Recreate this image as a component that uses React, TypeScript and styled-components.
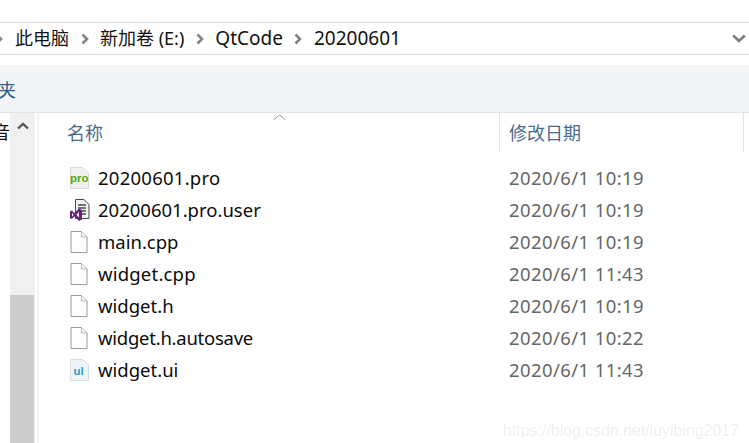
import React from 'react';
import styled, { createGlobalStyle } from 'styled-components';

const GlobalStyle = createGlobalStyle`
  html, body {
    margin: 0;
    padding: 0;
    background: #fff;
  }
`;

const FONT = `"Noto Sans", "Noto Sans CJK SC", sans-serif`;

const Page = styled.div`
  width: 749px;
  height: 443px;
  overflow: hidden;
  position: relative;
  display: flex;
  flex-direction: column;
  background: #fff;
  font-family: ${FONT};
  color: #111;
`;

const AddressBar = styled.div`
  margin-top: 22px;
  height: 31px;
  flex: none;
  display: flex;
  align-items: center;
  border-top: 1px solid #d9d9d9;
  border-bottom: 1px solid #d9d9d9;
  font-size: 18px;
`;

const LeadChevron = styled.span`
  width: 20px;
  margin-left: -5px;
  display: flex;
  align-items: center;
  flex: none;
`;

const Crumb = styled.span<{ $size: number }>`
  white-space: nowrap;
  line-height: 31px;
  font-size: ${p => p.$size}px;
`;

const CrumbSep = styled.span`
  width: 31px;
  display: flex;
  justify-content: center;
  align-items: center;
  flex: none;
`;

const Spacer = styled.div`
  flex: 1;
`;

const DownChevron = styled.svg`
  margin-right: 3px;
  flex: none;
`;

const Ribbon = styled.div`
  margin-top: 10px;
  height: 47px;
  flex: none;
  display: flex;
  align-items: center;
  background: #f3f4f6;
  border-bottom: 1px solid #e3e3e3;
  overflow: hidden;
`;

const RibbonLabel = styled.span`
  margin-left: -2px;
  font-size: 18px;
  color: #2d5a8c;
`;

const Body = styled.div`
  flex: 1;
  min-height: 0;
  display: flex;
`;

const NavPane = styled.div`
  width: 39px;
  flex: none;
  display: flex;
  overflow: hidden;
  border-right: 2px solid #f5f5f5;
  box-sizing: border-box;
`;

const NavText = styled.div`
  width: 10px;
  flex: none;
  overflow: hidden;
  direction: rtl;
  padding-top: 7px;
  font-size: 18px;
  line-height: 24px;
  white-space: nowrap;
`;

const Scrollbar = styled.div`
  width: 25px;
  flex: none;
  display: flex;
  flex-direction: column;
  background: #f0f0f0;
`;

const ScrollUp = styled.div`
  height: 32px;
  display: flex;
  justify-content: center;
  padding-top: 9px;
  box-sizing: border-box;
  flex: none;
`;

const ScrollTrack = styled.div`
  height: 150px;
  flex: none;
`;

const ScrollThumb = styled.div`
  flex: 1;
  width: 24px;
  background: #cdcdcd;
`;

const Main = styled.div`
  flex: 1;
  min-width: 0;
  position: relative;
`;

const SortCaret = styled.svg`
  position: absolute;
  left: 234px;
  top: 1px;
`;

const HeaderRow = styled.div`
  height: 39px;
  display: flex;
`;

const HeaderCell = styled.div<{ $width: number }>`
  width: ${p => p.$width}px;
  flex: none;
  box-sizing: border-box;
  border-right: 1px solid #e5e5e5;
  font-size: 18px;
  line-height: 41px;
  color: #4c6a8e;
  padding-left: ${p => (p.$width > 300 ? 28 : 9)}px;
`;

const FileList = styled.div`
  padding-top: 10px;
`;

const Row = styled.div`
  height: 32px;
  display: flex;
  align-items: center;
  font-size: 18.5px;
`;

const IconSlot = styled.span`
  width: 59px;
  padding-left: 31px;
  box-sizing: border-box;
  flex: none;
  display: flex;
  align-items: center;
`;

const FileName = styled.span<{ $track: number }>`
  width: 401px;
  flex: none;
  padding-bottom: 2px;
  color: #0c0c0c;
  white-space: nowrap;
  letter-spacing: ${p => p.$track}px;
`;

const FileDate = styled.span`
  padding: 0 0 2px 10px;
  color: #666;
  white-space: nowrap;
  letter-spacing: 0.4px;
`;

const Watermark = styled.div`
  position: absolute;
  right: 10px;
  bottom: 3px;
  font-family: "Liberation Sans", sans-serif;
  font-size: 15.9px;
  color: #f0f0f0;
  filter: blur(0.4px);
`;

const Chevron = () => (
  <svg width="8" height="12" viewBox="0 0 8 12">
    <path d="M1.5 1.5 L6 6 L1.5 10.5" fill="none" stroke="#858585" strokeWidth="2.6" />
  </svg>
);

const PlainIcon = () => (
  <svg width="18" height="22" viewBox="0 0 18 22">
    <path d="M1 .5 H11.5 L17 6 V21.5 H1 Z" fill="#fdfdfd" stroke="#9a9a9a" />
    <path d="M11.5 .5 V6 H17" fill="#f4f4f4" stroke="#b5b5b5" />
  </svg>
);

const ProIcon = () => (
  <svg width="20" height="22" viewBox="0 0 20 22">
    <path d="M.5 .5 H12.5 L18.5 6 V21.5 H.5 Z" fill="#f0f0ee" stroke="#dadada" />
    <text x="0" y="14.5" fontFamily="Liberation Sans, sans-serif" fontSize="11.5" fontWeight="700" fill="#55a80f">
      pro
    </text>
  </svg>
);

const UserIcon = () => (
  <svg width="20" height="22" viewBox="0 0 20 22">
    <path d="M5.5 .5 H14 L19 5.5 V19.5 H5.5 Z" fill="#f2f2f2" stroke="#4a4a4a" />
    <path d="M8 6 H16 M8 9 H16 M8 12 H16 M12 15 H16" stroke="#4a4a4a" strokeWidth="1.3" />
    <path d="M1.5 11.5 L4.6 14 L9 9.6 L12 11 V20.5 L9 21.9 L4.6 17.6 L1.5 20 L0 19 V12.5 Z M2 14 V17.5 L3.8 15.8 Z M9 13 L6.3 15.8 L9 18.5 Z" fill="#68217a" fillRule="evenodd" />
  </svg>
);

const UiIcon = () => (
  <svg width="19" height="22" viewBox="0 0 19 22">
    <path d="M.5 .5 H12.5 L18.5 6 V21.5 H.5 Z" fill="#edf4f7" stroke="#d6dee2" />
    <text x="3.5" y="15.5" fontFamily="Liberation Sans, sans-serif" fontSize="11.5" fontWeight="700" fill="#2f9fc4">
      ul
    </text>
  </svg>
);

const files: { name: string; date: string; track: number; icon: React.ReactNode }[] = [
  { name: '20200601.pro', date: '2020/6/1 10:19', track: 0.25, icon: <ProIcon /> },
  { name: '20200601.pro.user', date: '2020/6/1 10:19', track: 0, icon: <UserIcon /> },
  { name: 'main.cpp', date: '2020/6/1 10:19', track: 0, icon: <PlainIcon /> },
  { name: 'widget.cpp', date: '2020/6/1 11:43', track: 0.2, icon: <PlainIcon /> },
  { name: 'widget.h', date: '2020/6/1 10:19', track: 0, icon: <PlainIcon /> },
  { name: 'widget.h.autosave', date: '2020/6/1 10:22', track: -0.25, icon: <PlainIcon /> },
  { name: 'widget.ui', date: '2020/6/1 11:43', track: 0, icon: <UiIcon /> },
];

const crumbs = [
  { label: '此电脑', size: 18 },
  { label: '新加卷 (E:)', size: 18 },
  { label: 'QtCode', size: 19 },
  { label: '20200601', size: 19 },
];

export default function App() {
  return (
    <Page>
      <GlobalStyle />
      <AddressBar>
        <LeadChevron>
          <Chevron />
        </LeadChevron>
        {crumbs.map((c, i) => (
          <React.Fragment key={c.label}>
            {i > 0 && (
              <CrumbSep>
                <Chevron />
              </CrumbSep>
            )}
            <Crumb $size={c.size}>{c.label}</Crumb>
          </React.Fragment>
        ))}
        <Spacer />
        <DownChevron width="14" height="9" viewBox="0 0 14 9">
          <path d="M1.2 1.5 L7 7 L12.8 1.5" fill="none" stroke="#7f7f7f" strokeWidth="2.6" />
        </DownChevron>
      </AddressBar>
      <Ribbon>
        <RibbonLabel>夹</RibbonLabel>
      </Ribbon>
      <Body>
        <NavPane>
          <NavText>音</NavText>
          <Scrollbar>
            <ScrollUp>
              <svg width="12" height="8" viewBox="0 0 12 8">
                <path d="M1 6.5 L6 1.8 L11 6.5" fill="none" stroke="#555" strokeWidth="2.4" />
              </svg>
            </ScrollUp>
            <ScrollTrack />
            <ScrollThumb />
          </Scrollbar>
        </NavPane>
        <Main>
          <SortCaret width="13" height="7" viewBox="0 0 13 7">
            <path d="M.5 6 L6.5 .8 L12.5 6" fill="none" stroke="#9a9a9a" />
          </SortCaret>
          <HeaderRow>
            <HeaderCell $width={461}>名称</HeaderCell>
            <HeaderCell $width={244}>修改日期</HeaderCell>
          </HeaderRow>
          <FileList>
            {files.map(f => (
              <Row key={f.name}>
                <IconSlot>{f.icon}</IconSlot>
                <FileName $track={f.track}>{f.name}</FileName>
                <FileDate>{f.date}</FileDate>
              </Row>
            ))}
          </FileList>
        </Main>
      </Body>
      <Watermark>https://blog.csdn.net/luyibing2017</Watermark>
    </Page>
  );
}
